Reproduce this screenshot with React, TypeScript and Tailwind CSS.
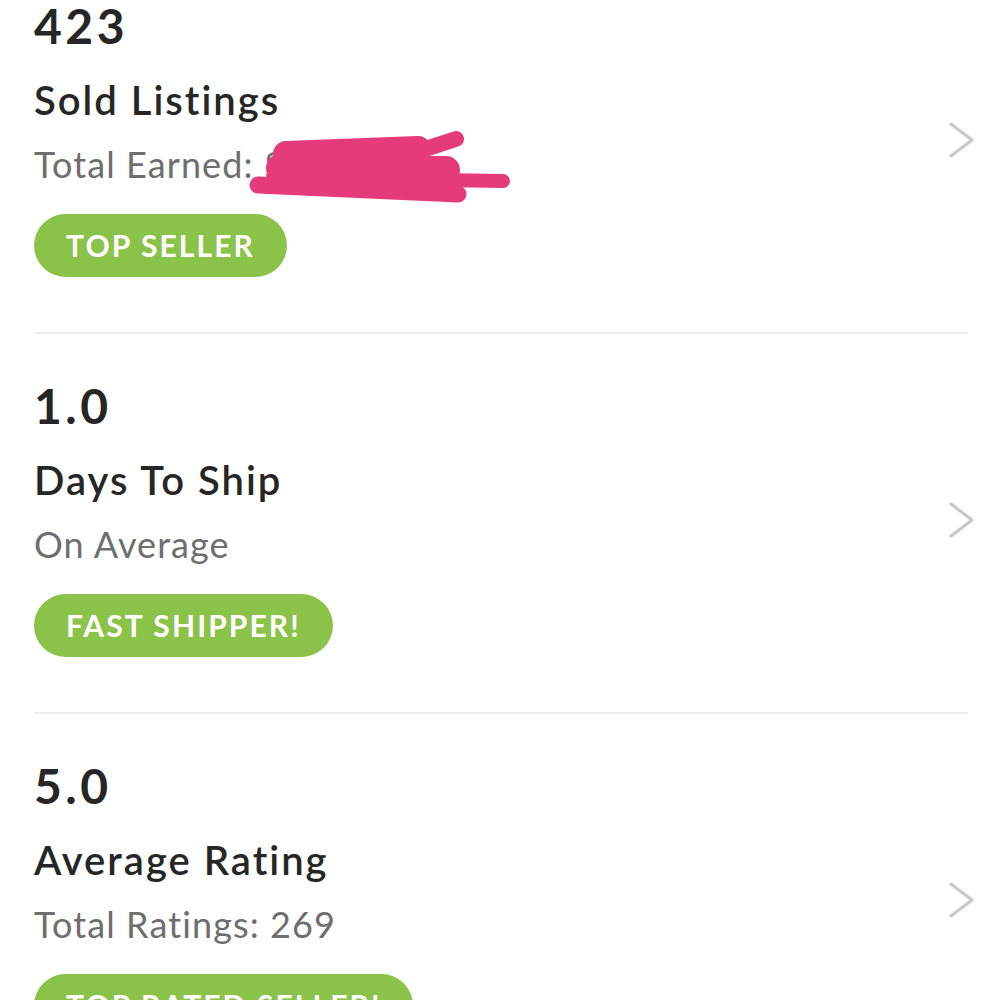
import { ReactNode } from "react";

type Stat = {
  value: string;
  title: string;
  subtitle: ReactNode;
  badge: string;
};

function Scribble() {
  return (
    <svg
      className="absolute left-[214px] top-[-12px] pointer-events-none"
      width="270"
      height="80"
      viewBox="0 0 270 80"
    >
      <g stroke="#e53b7b" strokeLinecap="round" fill="none">
        <path d="M38 24 L170 19" strokeWidth="26" />
        <path d="M168 22 L208 9" strokeWidth="16" />
        <path d="M32 38 L198 40" strokeWidth="28" />
        <path d="M60 48 L255 51" strokeWidth="14" />
        <path d="M10 55 L210 64" strokeWidth="17" />
        <path d="M28 48 L188 53" strokeWidth="20" />
      </g>
    </svg>
  );
}

function Chevron() {
  return (
    <svg width="28" height="38" viewBox="0 0 28 38" className="shrink-0 mr-[-8px]">
      <path
        d="M3 3 L24 19 L3 35"
        stroke="#c8c8c8"
        strokeWidth="3.2"
        fill="none"
        strokeLinecap="round"
        strokeLinejoin="round"
      />
    </svg>
  );
}

const stats: Stat[] = [
  {
    value: "423",
    title: "Sold Listings",
    subtitle: (
      <span className="relative">
        Total Earned: $
        <Scribble />
      </span>
    ),
    badge: "TOP SELLER",
  },
  { value: "1.0", title: "Days To Ship", subtitle: "On Average", badge: "FAST SHIPPER!" },
  { value: "5.0", title: "Average Rating", subtitle: "Total Ratings: 269", badge: "TOP RATED SELLER!" },
];

export default function App() {
  return (
    <div className="w-[1000px] h-[1000px] overflow-hidden bg-white font-['Lato','Open_Sans',sans-serif]">
      <div className="pl-[34px] pr-[32px]">
        {stats.map((s, i) => (
          <div key={i} className={i > 0 ? "border-t-2 border-[#ededed]" : ""}>
            <div className={`flex items-center ${i === 0 ? "pt-[2px]" : "pt-[48px]"} pb-[55px]`}>
              <div className="flex-1 flex flex-col items-start">
                <p className="text-[48px] leading-[48px] font-bold text-[#262626] tracking-[3.5px]">{s.value}</p>
                <p className="mt-[30px] text-[40px] leading-[40px] font-semibold text-[#262626] tracking-[2px]">{s.title}</p>
                <p className="mt-[26px] text-[36px] leading-[36px] text-[#6e6e6e] tracking-[1.1px]">{s.subtitle}</p>
                <div className="mt-[32px] h-[63px] px-[32px] rounded-full bg-[#8bc34a] flex items-center">
                  <span className="text-[30px] font-bold text-white tracking-[2.1px]">{s.badge}</span>
                </div>
              </div>
              <Chevron />
            </div>
          </div>
        ))}
      </div>
    </div>
  );
}
